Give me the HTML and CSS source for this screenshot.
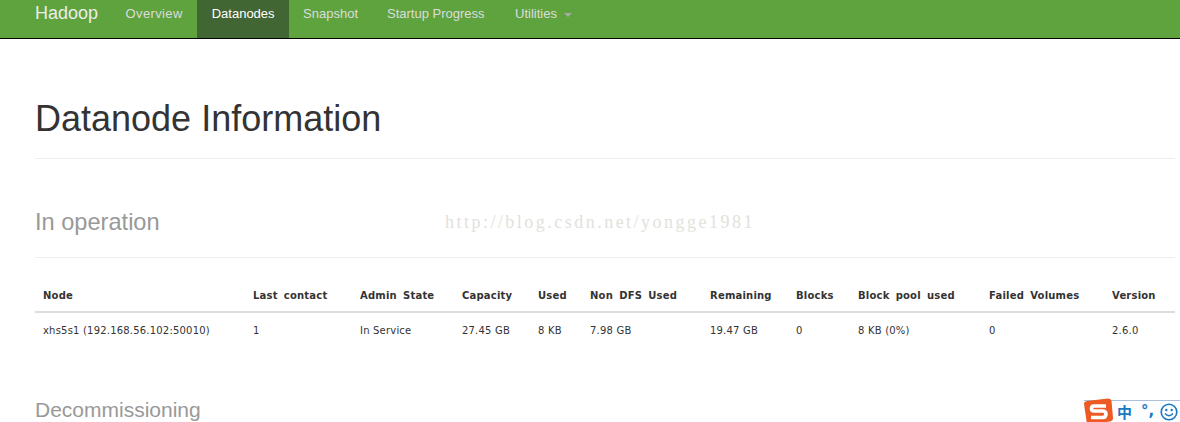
FILE: index.html
```html
<!DOCTYPE html>
<html lang="en">
<head>
<meta charset="utf-8">
<title>Datanode Information</title>
<link rel="stylesheet" href="styles.css">
</head>
<body>
<nav class="navbar">
  <a class="brand">Hadoop</a>
  <a class="nav-link">Overview</a>
  <a class="nav-link active">Datanodes</a>
  <a class="nav-link">Snapshot</a>
  <a class="nav-link">Startup Progress</a>
  <a class="nav-link">Utilities <span class="caret"></span></a>
</nav>
<main class="container">
  <header class="page-header"><h1>Datanode Information</h1></header>
  <header class="section-header">
    <h2>In operation</h2>
    <span class="watermark">http://blog.csdn.net/yongge1981</span>
  </header>
  <table class="nodes">
    <thead>
      <tr>
        <th class="c-node">Node</th><th class="c-contact">Last contact</th><th class="c-admin">Admin State</th><th class="c-cap">Capacity</th><th class="c-used">Used</th><th class="c-nondfs">Non DFS Used</th><th class="c-rem">Remaining</th><th class="c-blocks">Blocks</th><th class="c-pool">Block pool used</th><th class="c-failed">Failed Volumes</th><th>Version</th>
      </tr>
    </thead>
    <tbody>
      <tr>
        <td>xhs5s1 (192.168.56.102:50010)</td><td>1</td><td>In Service</td><td>27.45 GB</td><td>8 KB</td><td>7.98 GB</td><td>19.47 GB</td><td>0</td><td>8 KB (0%)</td><td>0</td><td>2.6.0</td>
      </tr>
    </tbody>
  </table>
  <h2 class="decom">Decommissioning</h2>
</main>
<aside class="ime">
  <svg class="ime-logo" width="29" height="26" viewBox="0 0 29 26"><path d="M3 3 L24 0.500 Q27 0.500 27.500 3 L29 20 Q29 23 26 23.500 L6 26 Q3 26 2.500 23 L0 6 Q0 3.500 3 3Z" fill="#ee5a24"/><path d="M22 8 H10 Q7.500 8 7.500 10.500 Q7.500 13 10 13 H18.500 Q22 13 22 16 Q22 19.500 18.500 19.500 H7" fill="none" stroke="#fff" stroke-width="3.600"/></svg>
  <span class="ime-zh">中</span>
  <span class="ime-punct">°,</span>
  <svg class="ime-face" width="18" height="18" viewBox="0 0 18 18"><circle cx="9" cy="9" r="7.800" fill="none" stroke="#1a78c2" stroke-width="1.600"/><circle cx="6.300" cy="7" r="1.200" fill="#1a78c2"/><circle cx="11.700" cy="7" r="1.200" fill="#1a78c2"/><path d="M5 10.500 Q9 14.800 13 10.500" fill="none" stroke="#1a78c2" stroke-width="1.500"/></svg>
</aside>
</body>
</html>
```
FILE: styles.css
```css
* { box-sizing: border-box; }
html, body { margin: 0; padding: 0; height: 422px; overflow: hidden; background: #fff; }
body { font-family: "Liberation Sans", Arial, sans-serif; color: #333; position: relative; }

.navbar { display: flex; height: 39px; padding-left: 20px; background: #5fa33e; border-bottom: 1px solid #000; align-items: stretch; }
.brand { padding: 0 13px 0 15px; font-size: 18px; line-height: 27px; color: #ececec; }
.nav-link { padding: 0 14.500px; font-size: 13px; line-height: 28px; color: #dcdcdc; }
.nav-link:nth-child(2) { letter-spacing: 0.370px; }
.nav-link:nth-child(4) { padding-left: 14px; }
.nav-link:nth-child(6) { padding-left: 16px; }
.nav-link.active { background: #426633; color: #fff; }
.caret { display: inline-block; width: 0; height: 0; margin-left: 3px; vertical-align: middle; border-top: 4px solid #a9a9a9; border-left: 4px solid transparent; border-right: 4px solid transparent; }

.container { padding-left: 35px; }
.page-header { height: 120px; padding-top: 60px; border-bottom: 1px solid #eee; width: 1140px; }
h1 { margin: 0; font-size: 36px; font-weight: 400; line-height: 40px; color: #333; }
.section-header { position: relative; height: 99px; padding-top: 49px; border-bottom: 1px solid #eee; width: 1140px; }
h2 { margin: 0; font-size: 23.600px; font-weight: 400; line-height: 28px; color: #999; }
.watermark { position: absolute; left: 410px; top: 52px; font-family: "Liberation Serif", serif; font-size: 18px; letter-spacing: 2.480px; line-height: 22px; color: #e2e2dc; white-space: nowrap; }

.nodes { border-collapse: collapse; table-layout: fixed; width: 1140px; margin-top: 21px; font-family: "DejaVu Sans", sans-serif; font-size: 10px; }
.nodes th { height: 33px; padding: 0 0 0 8px; text-align: left; font-weight: 700; color: #333; border-bottom: 2px solid #ddd; white-space: nowrap; letter-spacing: 0.200px; word-spacing: 2.500px; }
.nodes td { height: 36px; padding: 0 0 0 8px; color: #333; white-space: nowrap; letter-spacing: 0.200px; }
.c-node { width: 210px; }
.c-contact { width: 107px; }
.c-admin { width: 102px; }
.c-cap { width: 76px; }
.c-used { width: 52px; }
.c-nondfs { width: 120px; }
.c-rem { width: 86px; }
.c-blocks { width: 62px; }
.c-pool { width: 131px; }
.c-failed { width: 123px; }

h2.decom { margin-top: 47px; font-size: 21px; line-height: 30px; }

.ime { position: absolute; right: 0; top: 400px; width: 96px; height: 22px; border-top: 1px solid #a9c1d8; background: #fdfeff; }
.ime-logo { position: absolute; left: 0; top: -3px; }
.ime-zh { position: absolute; left: 33px; top: 1px; font-family: "Noto Sans CJK SC", sans-serif; font-size: 15px; line-height: 20px; font-weight: 700; color: #1a78c2; }
.ime-punct { position: absolute; left: 57px; top: 0; font-family: "DejaVu Sans", sans-serif; font-size: 15px; line-height: 20px; font-weight: 700; color: #1a78c2; }
.ime-face { position: absolute; left: 76px; top: 2px; }
```
